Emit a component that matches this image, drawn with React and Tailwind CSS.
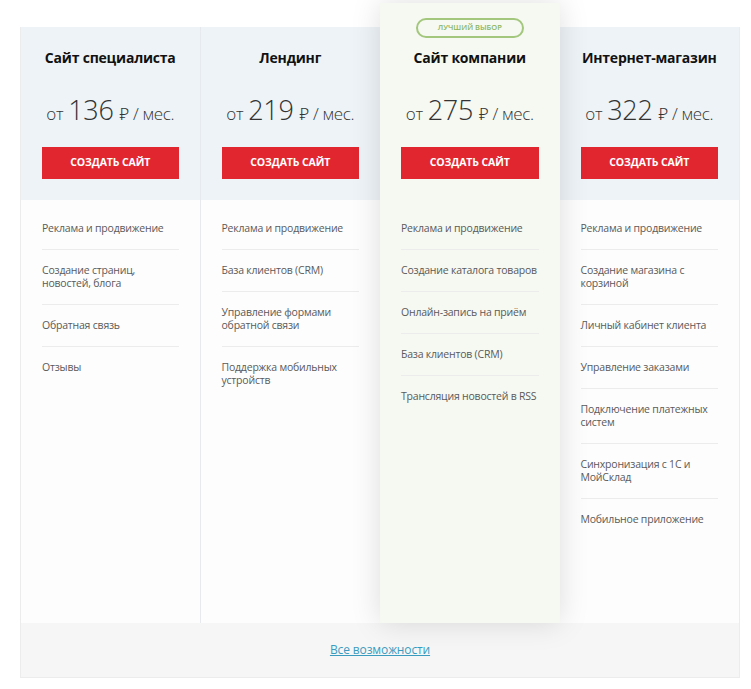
const plans = [
  {
    title: 'Сайт специалиста',
    price: 136,
    features: ['Реклама и продвижение', 'Создание страниц,\nновостей, блога', 'Обратная связь', 'Отзывы'],
  },
  {
    title: 'Лендинг',
    price: 219,
    features: ['Реклама и продвижение', 'База клиентов (CRM)', 'Управление формами\nобратной связи', 'Поддержка мобильных\nустройств'],
  },
  {
    title: 'Сайт компании',
    price: 275,
    best: true,
    features: [
      'Реклама и продвижение',
      'Создание каталога товаров',
      'Онлайн-запись на приём',
      'База клиентов (CRM)',
      'Трансляция новостей в RSS',
    ],
  },
  {
    title: 'Интернет-магазин',
    price: 322,
    features: [
      'Реклама и продвижение',
      'Создание магазина с\nкорзиной',
      'Личный кабинет клиента',
      'Управление заказами',
      'Подключение платежных\nсистем',
      'Синхронизация с 1С и\nМойСклад',
      'Мобильное приложение',
    ],
  },
]

function PlanColumn({ plan, first }) {
  return (
    <div
      className={
        plan.best
          ? 'relative z-10 -mt-6 flex flex-col bg-[#f6f8f2] shadow-[0_0_28px_rgba(0,0,0,0.13)]'
          : 'flex flex-col ' + (first ? 'border-r border-[#e6eaee]' : '')
      }
    >
      {/* header with title, price and button */}
      <div className={plan.best ? 'flex flex-col items-center px-[21px] pt-[15px] pb-[21px]' : 'flex flex-col items-center bg-[#eef3f7] px-[21px] pt-[21px] pb-[21px]'}>
        {plan.best && (
          <div className="mb-[10px] flex h-5 w-[108px] items-center justify-center rounded-full border-2 border-[#a3c77c] text-[7.5px] font-semibold leading-none text-[#8ab65c]">
            ЛУЧШИЙ ВЫБОР
          </div>
        )}
        <h2 className="whitespace-nowrap text-[14px] font-bold leading-5 tracking-[-0.015em] text-[#111]">{plan.title}</h2>
        <div className="mt-[24px] flex h-9 items-baseline whitespace-nowrap font-light tracking-[-0.02em] text-[#333]">
          <span className="text-[17px]">от</span>
          <span className="ml-[5px] text-[27px] leading-9">{plan.price}</span>
          <span className="ml-[6px] font-['Noto_Sans',sans-serif] text-[17px] font-light">₽</span>
          <span className="ml-[4px] text-[17px]">/ мес.</span>
        </div>
        <button className="mt-[19px] h-8 w-full bg-[#e2262f] text-[10.5px] font-bold tracking-[-0.01em] text-white">
          СОЗДАТЬ САЙТ
        </button>
      </div>

      {/* features list */}
      <ul className="flex-1 px-[21px] pt-2">
        {plan.features.map((f, i) => (
          <li
            key={f}
            className={
              'whitespace-pre-line py-[14px] text-[10.5px] leading-[13px] tracking-[-0.02em] text-[#5a5a5a] ' +
              (i < plan.features.length - 1 ? 'border-b border-[#ececec]' : '')
            }
          >
            {f}
          </li>
        ))}
      </ul>
    </div>
  )
}

export default function App() {
  return (
    <div className="min-h-screen bg-white pt-[27px] pl-5 font-['Open_Sans',sans-serif]">
      <div className="w-[720px] border border-t-0 border-[#ececec] bg-[#fdfdfd]">
        <div className="grid h-[596px] grid-cols-4">
          {plans.map((p, i) => (
            <PlanColumn key={p.title} plan={p} first={i === 0} />
          ))}
        </div>
        <div className="flex h-[54px] items-center justify-center bg-[#f6f6f6]">
          <a href="#" className="text-[12px] tracking-[-0.01em] text-[#3b9bbf] underline">
            Все возможности
          </a>
        </div>
      </div>
    </div>
  )
}
